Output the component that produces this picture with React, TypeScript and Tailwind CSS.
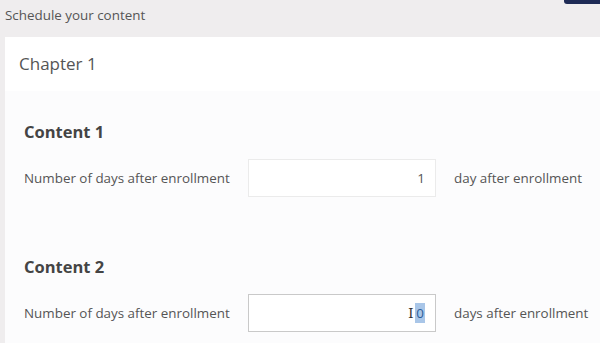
export default function App() {
  const rows = [
    { title: "Content 1", value: "1", unit: "day after enrollment", focused: false },
    { title: "Content 2", value: "0", unit: "days after enrollment", focused: true },
  ]

  return (
    <div
      className="w-[600px] h-[343px] overflow-hidden bg-[#efedee] relative"
      style={{ fontFamily: '"Open Sans", "Liberation Sans", sans-serif' }}
    >
      {/* top-right navy button edge */}
      <div className="absolute top-0 right-0 w-[36px] h-[4px] bg-[#1e2a55] rounded-bl-[3px]" />

      <div className="h-[37px] pl-[5px] pt-[5px] text-[13.4px] text-[#555] leading-[20px]">
        Schedule your content
      </div>

      <div className="ml-[5px] bg-white h-[306px]">
        <div className="h-[54px] pl-[14px] pt-[15px] text-[17px] leading-[24px] text-[#555]">
          Chapter 1
        </div>

        <div className="bg-[#fcfcfd] h-full pl-[19px]">
          {rows.map((r) => (
            <div key={r.title} className="pt-[29px] h-[135px]">
              <div className="text-[16.5px] font-bold text-[#444] leading-[24px]">{r.title}</div>
              <div className="flex items-center mt-[15px]">
                <div className="w-[224px] text-[13.4px] text-[#555]">Number of days after enrollment</div>
                <div
                  className={`w-[188px] h-[38px] bg-white flex items-center justify-end pr-[10px] text-[13.4px] text-[#555] border ${
                    r.focused ? "border-[#c9c9c9]" : "border-[#ebebeb]"
                  }`}
                >
                  {r.focused ? (
                    <>
                      <span className="text-[#333] text-[15px] font-serif leading-none mr-[2px]">I</span>
                      <span className="bg-[#a9c6e8] text-[#2d5f9a] px-[1px]">{r.value}</span>
                    </>
                  ) : (
                    <span>{r.value}</span>
                  )}
                </div>
                <div className="ml-[18px] text-[13.4px] text-[#555]">{r.unit}</div>
              </div>
            </div>
          ))}
        </div>
      </div>
    </div>
  )
}
